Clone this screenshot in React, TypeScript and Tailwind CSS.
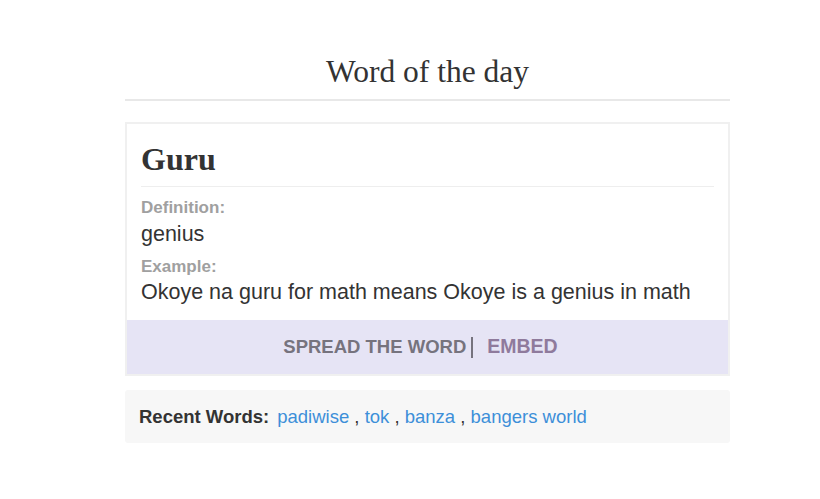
export default function App() {
  return (
    <div className="w-[820px] h-[499px] bg-white">
      <div className="ml-[125px] w-[605px] pt-[55px]">
        <div className="border-b-2 border-[#e8e8e8] pb-[10px]">
          <h1 className="text-center text-[31.5px] leading-[34px] text-[#333] font-['Liberation_Serif',serif]">
            Word of the day
          </h1>
        </div>
        <div className="mt-[21px] border-2 border-[#f0f0f0]">
          <div className="px-[14px] pt-[18px] pb-[16px] font-['Liberation_Sans',Arial,sans-serif]">
            <div className="text-[32px] leading-[34px] font-bold text-[#333] font-['Liberation_Serif',serif]">
              Guru
            </div>
            <div className="mt-[10px] border-t border-[#eeeeee]" />
            <div className="mt-[12px] text-[17px] leading-[18px] font-bold text-[#a0a0a0]">Definition:</div>
            <div className="mt-[5px] text-[21.5px] leading-[24px] text-[#333]">genius</div>
            <div className="mt-[12px] text-[17px] leading-[18px] font-bold text-[#a0a0a0]">Example:</div>
            <div className="mt-[4px] text-[21.5px] leading-[24px] text-[#333]">
              Okoye na guru for math means Okoye is a genius in math
            </div>
          </div>
          <div className="h-[54px] bg-[#e6e4f5] flex items-center justify-center pr-[14px] font-['Liberation_Sans',Arial,sans-serif] text-[18.5px] font-bold">
            <span className="text-[#76737e]">SPREAD THE WORD</span>
            <span className="ml-[5px] w-[2px] h-[21px] bg-[#76737e]" />
            <span className="ml-[14px] text-[19.5px] text-[#8f7a9c]">EMBED</span>
          </div>
        </div>
        <div className="mt-[14px] h-[53px] bg-[#f7f7f7] rounded-[3px] flex items-center px-[14px] font-['Liberation_Sans',Arial,sans-serif] text-[18.5px] text-[#333]">
          <span className="font-bold">Recent Words:</span>
          <span className="ml-[8px]">
            <a className="text-[#3d8fd9]">padiwise</a> , <a className="text-[#3d8fd9]">tok</a> ,{" "}
            <a className="text-[#3d8fd9]">banza</a> , <a className="text-[#3d8fd9]">bangers world</a>
          </span>
        </div>
      </div>
    </div>
  );
}
